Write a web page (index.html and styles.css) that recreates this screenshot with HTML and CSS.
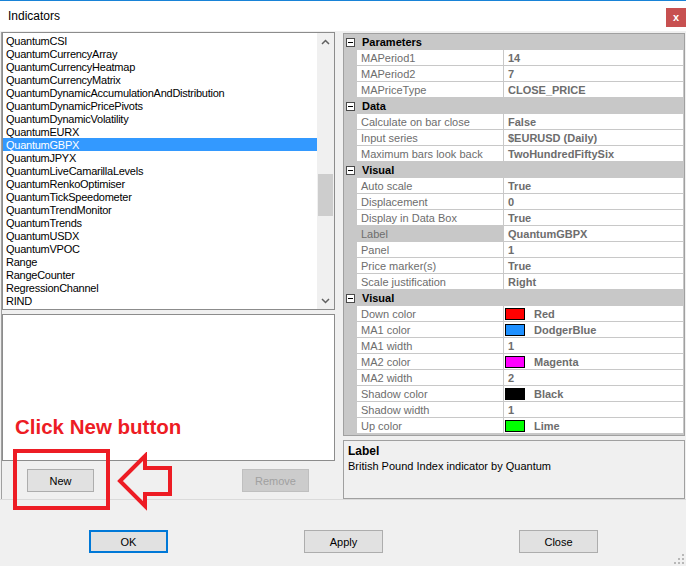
FILE: index.html
```html
<!DOCTYPE html>
<html lang="en">

<head>
    <meta charset="UTF-8">
    <title>Indicators</title>
    <link rel="stylesheet" href="styles.css">
</head>

<body>
    <div class="window">
        <div class="titlebar">
            <span class="title">Indicators</span>
            <span class="close">x</span>
        </div>

        <div class="main">
            <div class="left">
                <div class="listbox">
                    <ul class="items">
                        <li>QuantumCSI</li>
                        <li>QuantumCurrencyArray</li>
                        <li>QuantumCurrencyHeatmap</li>
                        <li>QuantumCurrencyMatrix</li>
                        <li>QuantumDynamicAccumulationAndDistribution</li>
                        <li>QuantumDynamicPricePivots</li>
                        <li>QuantumDynamicVolatility</li>
                        <li>QuantumEURX</li>
                        <li class="selected">QuantumGBPX</li>
                        <li>QuantumJPYX</li>
                        <li>QuantumLiveCamarillaLevels</li>
                        <li>QuantumRenkoOptimiser</li>
                        <li>QuantumTickSpeedometer</li>
                        <li>QuantumTrendMonitor</li>
                        <li>QuantumTrends</li>
                        <li>QuantumUSDX</li>
                        <li>QuantumVPOC</li>
                        <li>Range</li>
                        <li>RangeCounter</li>
                        <li>RegressionChannel</li>
                        <li>RIND</li>
                    </ul>
                    <div class="vscroll">
                        <div class="sb-arrow">
                            <svg width="9" height="6" viewBox="0 0 9 6"><path d="M1 5 L4.5 1.5 L8 5" fill="none" stroke="#606060" stroke-width="1.5"/></svg>
                        </div>
                        <div class="sb-track"><div class="sb-thumb"></div></div>
                        <div class="sb-arrow">
                            <svg width="9" height="6" viewBox="0 0 9 6"><path d="M1 1 L4.5 4.5 L8 1" fill="none" stroke="#606060" stroke-width="1.5"/></svg>
                        </div>
                    </div>
                </div>
                <div class="detailbox"></div>
                <div class="listbuttons">
                    <button class="btn small">New</button>
                    <button class="btn small" disabled>Remove</button>
                </div>
            </div>

            <div class="right">
                <div class="propgrid">
                    <div class="cat"><span class="toggle"></span>Parameters</div>
                    <div class="prop"><span class="pname">MAPeriod1</span><span class="pval">14</span></div>
                    <div class="prop"><span class="pname">MAPeriod2</span><span class="pval">7</span></div>
                    <div class="prop"><span class="pname">MAPriceType</span><span class="pval">CLOSE_PRICE</span></div>

                    <div class="cat"><span class="toggle"></span>Data</div>
                    <div class="prop"><span class="pname">Calculate on bar close</span><span class="pval">False</span></div>
                    <div class="prop"><span class="pname">Input series</span><span class="pval">$EURUSD (Daily)</span></div>
                    <div class="prop"><span class="pname">Maximum bars look back</span><span class="pval">TwoHundredFiftySix</span></div>

                    <div class="cat"><span class="toggle"></span>Visual</div>
                    <div class="prop"><span class="pname">Auto scale</span><span class="pval">True</span></div>
                    <div class="prop"><span class="pname">Displacement</span><span class="pval">0</span></div>
                    <div class="prop"><span class="pname">Display in Data Box</span><span class="pval">True</span></div>
                    <div class="prop selected"><span class="pname">Label</span><span class="pval">QuantumGBPX</span></div>
                    <div class="prop"><span class="pname">Panel</span><span class="pval">1</span></div>
                    <div class="prop"><span class="pname">Price marker(s)</span><span class="pval">True</span></div>
                    <div class="prop"><span class="pname">Scale justification</span><span class="pval">Right</span></div>

                    <div class="cat"><span class="toggle"></span>Visual</div>
                    <div class="prop"><span class="pname">Down color</span><span class="pval"><span class="swatch" style="background:#ff0000"></span>Red</span></div>
                    <div class="prop"><span class="pname">MA1 color</span><span class="pval"><span class="swatch" style="background:#1e90ff"></span>DodgerBlue</span></div>
                    <div class="prop"><span class="pname">MA1 width</span><span class="pval">1</span></div>
                    <div class="prop"><span class="pname">MA2 color</span><span class="pval"><span class="swatch" style="background:#ff00ff"></span>Magenta</span></div>
                    <div class="prop"><span class="pname">MA2 width</span><span class="pval">2</span></div>
                    <div class="prop"><span class="pname">Shadow color</span><span class="pval"><span class="swatch" style="background:#000000"></span>Black</span></div>
                    <div class="prop"><span class="pname">Shadow width</span><span class="pval">1</span></div>
                    <div class="prop"><span class="pname">Up color</span><span class="pval"><span class="swatch" style="background:#00ff00"></span>Lime</span></div>
                </div>
                <div class="description">
                    <div class="desc-title">Label</div>
                    <div class="desc-text">British Pound Index indicator by Quantum</div>
                </div>
            </div>
        </div>

        <div class="footer">
            <button class="btn wide default">OK</button>
            <button class="btn wide">Apply</button>
            <button class="btn wide">Close</button>
        </div>

        <!-- annotation drawn over the dialog -->
        <div class="note">Click New button</div>
        <div class="note-box"></div>
        <svg class="note-arrow" width="60" height="60" viewBox="115 452 60 60">
            <path d="M120 481 L145 456 L145 468 L170 468 L170 494 L145 494 L145 506 Z" fill="none" stroke="#ed1c24" stroke-width="4" stroke-linejoin="miter"/>
        </svg>

        <svg class="grip" width="10" height="10" viewBox="0 0 10 10">
            <rect x="8" y="0" width="2" height="2" fill="#b8b8b8"/>
            <rect x="4" y="4" width="2" height="2" fill="#b8b8b8"/>
            <rect x="8" y="4" width="2" height="2" fill="#b8b8b8"/>
            <rect x="0" y="8" width="2" height="2" fill="#b8b8b8"/>
            <rect x="4" y="8" width="2" height="2" fill="#b8b8b8"/>
            <rect x="8" y="8" width="2" height="2" fill="#b8b8b8"/>
        </svg>
    </div>
</body>

</html>
```

FILE: styles.css
```css
html,
body {
    margin: 0;
    padding: 0;
    background-color: #f0f0f0;
}

body {
    font-family: "Liberation Sans", Arial, sans-serif;
    font-size: 11px;
    color: #000;
}

.window {
    position: relative;
    width: 686px;
    height: 566px;
    overflow: hidden;
    background-color: #f0f0f0;
}

/* title bar */
.titlebar {
    height: 30px;
    border-top: 1px solid #1883d7;
    background-color: #fff;
    display: flex;
    justify-content: space-between;
    align-items: flex-start;
}

.title {
    font-size: 12px;
    line-height: 14px;
    margin: 8px 0 0 8px;
}

.close {
    width: 20px;
    height: 19px;
    margin-top: 7px;
    background-color: #c75050;
    color: #fff;
    font-weight: bold;
    font-size: 11px;
    line-height: 18px;
    text-align: center;
}

/* main area */
.main {
    display: flex;
    height: 467px;
    padding-top: 1px;
    border-bottom: 1px solid #dadada;
}

.left {
    margin-left: 1px;
    border-left: 1px solid #a0a0a0;
    width: 333px;
    display: flex;
    flex-direction: column;
}

.listbox {
    height: 278px;
    box-sizing: border-box;
    border: 1px solid #8c8c8c;
    background-color: #fff;
    display: flex;
}

.items {
    list-style: none;
    margin: 0;
    padding: 1px 0 0 0;
    flex: 1;
    letter-spacing: -0.25px;
}

.items li {
    height: 13px;
    line-height: 15px;
    padding-left: 3px;
    white-space: nowrap;
}

.items li.selected {
    background-color: #3399ff;
    color: #fff;
}

.vscroll {
    width: 17px;
    background-color: #f0f0f0;
    display: flex;
    flex-direction: column;
}

.sb-arrow {
    height: 17px;
    display: flex;
    align-items: center;
    justify-content: center;
}

.sb-track {
    flex: 1;
    padding-top: 124px;
}

.sb-thumb {
    margin: 0 1px;
    height: 42px;
    background-color: #cdcdcd;
}

.detailbox {
    margin-top: 4px;
    height: 147px;
    box-sizing: border-box;
    border: 1px solid #8c8c8c;
    background-color: #fff;
}

.listbuttons {
    margin-top: 8px;
    display: flex;
    justify-content: space-between;
    padding: 0 26px 0 25px;
}

/* buttons */
.btn {
    font-family: "Liberation Sans", Arial, sans-serif;
    font-size: 11px;
    color: #000;
    background-color: #e1e1e1;
    border: 1px solid #adadad;
    padding: 0;
    height: 23px;
    box-sizing: border-box;
}

.btn.small {
    width: 67px;
}

.btn.wide {
    width: 79px;
}

.btn.default {
    border: 2px solid #0078d7;
}

.btn:disabled {
    background-color: #cccccc;
    border-color: #bfbfbf;
    color: #a0a0a0;
}

/* property grid */
.right {
    margin-left: 8px;
    width: 342px;
    display: flex;
    flex-direction: column;
}

.propgrid {
    margin-top: 1px;
    box-sizing: border-box;
    height: 403px;
    border: 1px solid #a0a0a0;
    background-color: #c8c8c8;
}

.cat {
    height: 16px;
    display: flex;
    align-items: center;
    font-weight: bold;
    line-height: 16px;
}

.toggle {
    position: relative;
    width: 9px;
    height: 9px;
    box-sizing: border-box;
    border: 1px solid #4a4a4a;
    background-color: #fff;
    margin: 0 7px 0 2px;
}

.toggle::after {
    content: "";
    position: absolute;
    left: 1px;
    top: 3px;
    width: 5px;
    height: 1px;
    background-color: #000;
}

.prop {
    display: flex;
    height: 16px;
    padding-left: 13px;
}

.pname,
.pval {
    box-sizing: border-box;
    height: 16px;
    padding-top: 1px;
    line-height: 15px;
    background-color: #fff;
    border-bottom: 1px solid #c8c8c8;
    color: #6d6d6d;
    white-space: nowrap;
}

.pname {
    width: 147px;
    padding-left: 4px;
    border-right: 1px solid #c8c8c8;
}

.prop.selected .pname {
    background-color: #c8c8c8;
}

.pval {
    flex: 1;
    padding-left: 4px;
    font-weight: bold;
    display: flex;
    align-items: center;
    border-right: 1px solid #c8c8c8;
}

.swatch {
    width: 20px;
    height: 12px;
    box-sizing: border-box;
    border: 1px solid #000;
    margin: 0 9px 0 -3px;
}

.description {
    margin-top: 4px;
    height: 59px;
    box-sizing: border-box;
    border: 1px solid #a0a0a0;
    background-color: #f0f0f0;
    padding: 4px 4px 3px;
    line-height: 13px;
}

.desc-title {
    font-weight: bold;
    font-size: 12px;
}

.desc-text {
    margin-top: 2px;
}

/* bottom buttons */
.footer {
    display: flex;
    gap: 136px;
    padding: 30px 0 0 89px;
}

/* red annotation */
.note {
    position: absolute;
    left: 15px;
    top: 417px;
    font-size: 20.5px;
    line-height: 1;
    font-weight: bold;
    color: #ed1c24;
}

.note-box {
    position: absolute;
    left: 13px;
    top: 449px;
    width: 97px;
    height: 61px;
    box-sizing: border-box;
    border: 4px solid #ed1c24;
}

.note-arrow {
    position: absolute;
    left: 115px;
    top: 452px;
}

.grip {
    position: absolute;
    right: 2px;
    bottom: 2px;
}
```
